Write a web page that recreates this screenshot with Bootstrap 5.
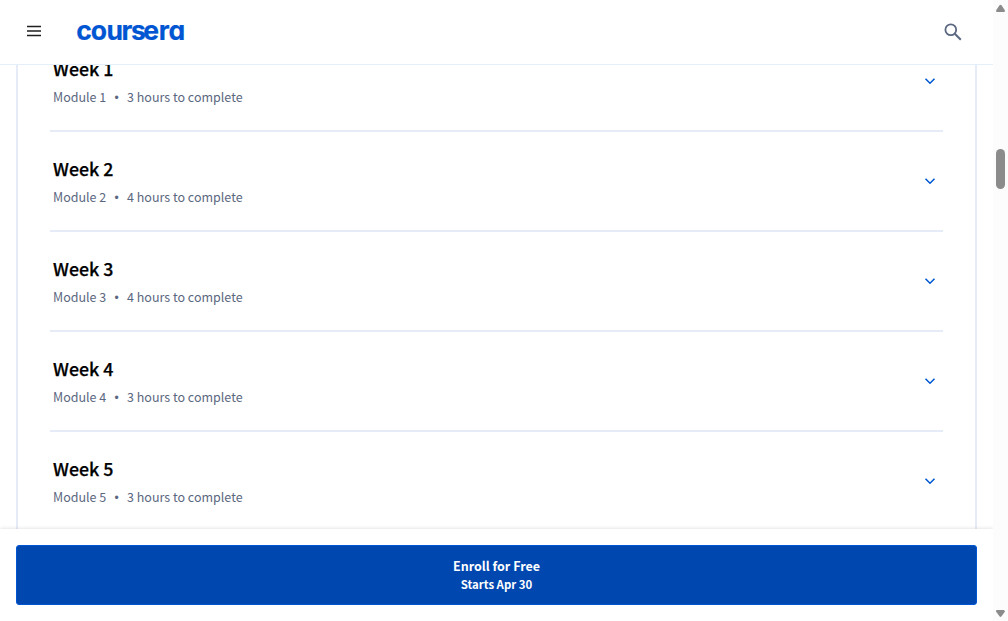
<!DOCTYPE html>
<html lang="en">
<head>
<meta charset="utf-8">
<meta name="viewport" content="width=device-width, initial-scale=1">
<title>Coursera</title>
<link href="https://cdn.jsdelivr.net/npm/bootstrap@5.3.0/dist/css/bootstrap.min.css" rel="stylesheet">
<style>
body{font-family:"Noto Sans CJK SC",sans-serif;color:#0f1114;background:#fff}
.topbar{height:65px;border-bottom:1px solid #e5eefb;padding:0 31px 3px 26px}
.topbar .find{margin-top:2px}
.syllabus{margin:-33px 16px 0;border:solid #e5ecf8;border-width:0 2px;padding:0 32px}
.week{height:100px;border-bottom:2px solid #e5ecf8;padding:24px 6px 0 3px}
.week h2{font-size:17.8px;line-height:24px;font-weight:500;margin:0 0 5px;color:#000;-webkit-text-stroke:.25px #000}
.week p{font-size:12.5px;line-height:24px;color:#5b6780;white-space:nowrap}
.part{width:53px}
.dot{width:21px;text-align:center;font-family:"Liberation Sans",sans-serif;font-size:12px;line-height:26px;height:24px}
.chev{margin-top:18px}
.enroll-bar{height:92px;padding:16px;box-shadow:0 0 4px rgba(0,0,0,.16);z-index:2}
.enroll{background:#0048b0;border:1px solid #0056d2;border-radius:3px;height:60px;color:#fff;font-weight:700;padding:0 0 1px}
.enroll:hover{background:#0048b0;color:#fff}
.enroll .t1{font-size:12.5px;line-height:18px}
.enroll .t2{font-size:11.4px;line-height:18px}
.scroller{width:15px;background:#fcfcfc}
.thumb{width:9px;height:40px;background:#8b8b8b;margin:135px 0 0 3px}
.wordmark{font:700 26.5px Inter,sans-serif;font-feature-settings:"cv11"}
</style>
</head>
<body>
<div class="d-flex vh-100 overflow-hidden">
  <div class="d-flex flex-column flex-grow-1">
    <header class="topbar d-flex align-items-center bg-white flex-shrink-0 position-relative z-1">
      <svg width="16" height="12" viewBox="0 0 16 12" aria-label="Menu"><path d="M1 1.5h14M1 6h14M1 10.5h14" stroke="#1f1f1f" stroke-width="1.6"/></svg>
      <svg class="ms-4" width="130" height="40" viewBox="66 11 130 40" aria-label="Coursera"><text class="wordmark" x="76.2 90.8 106.6 121.4 130.9 143.3 158.8 168.4" y="40.4" fill="#0056d2" stroke="#0056d2" stroke-width=".2">coursera</text></svg>
      <svg class="find ms-auto" width="18" height="18" viewBox="0 0 18 18" aria-label="Search"><circle cx="6.8" cy="6.8" r="5.4" fill="none" stroke="#5b6780" stroke-width="1.8"/><path d="m10.8 10.8 6 6" stroke="#5b6780" stroke-width="2"/></svg>
    </header>
    <main class="flex-grow-1 overflow-hidden">
      <div class="syllabus">
        <section class="week d-flex justify-content-between"><div><h2>Week 1</h2><p class="m-0 d-flex"><span class="part">Module 1</span><span class="dot">•</span><span>3 hours to complete</span></p></div><svg class="chev" width="14" height="14" viewBox="0 0 14 14"><path d="m2.5 4.8 4.5 4.4 4.5-4.4" fill="none" stroke="#0056d2" stroke-width="1.6"/></svg></section>
        <section class="week d-flex justify-content-between"><div><h2>Week 2</h2><p class="m-0 d-flex"><span class="part">Module 2</span><span class="dot">•</span><span>4 hours to complete</span></p></div><svg class="chev" width="14" height="14" viewBox="0 0 14 14"><path d="m2.5 4.8 4.5 4.4 4.5-4.4" fill="none" stroke="#0056d2" stroke-width="1.6"/></svg></section>
        <section class="week d-flex justify-content-between"><div><h2>Week 3</h2><p class="m-0 d-flex"><span class="part">Module 3</span><span class="dot">•</span><span>4 hours to complete</span></p></div><svg class="chev" width="14" height="14" viewBox="0 0 14 14"><path d="m2.5 4.8 4.5 4.4 4.5-4.4" fill="none" stroke="#0056d2" stroke-width="1.6"/></svg></section>
        <section class="week d-flex justify-content-between"><div><h2>Week 4</h2><p class="m-0 d-flex"><span class="part">Module 4</span><span class="dot">•</span><span>3 hours to complete</span></p></div><svg class="chev" width="14" height="14" viewBox="0 0 14 14"><path d="m2.5 4.8 4.5 4.4 4.5-4.4" fill="none" stroke="#0056d2" stroke-width="1.6"/></svg></section>
        <section class="week d-flex justify-content-between"><div><h2>Week 5</h2><p class="m-0 d-flex"><span class="part">Module 5</span><span class="dot">•</span><span>3 hours to complete</span></p></div><svg class="chev" width="14" height="14" viewBox="0 0 14 14"><path d="m2.5 4.8 4.5 4.4 4.5-4.4" fill="none" stroke="#0056d2" stroke-width="1.6"/></svg></section>
      </div>
    </main>
    <footer class="enroll-bar bg-white flex-shrink-0 position-relative">
      <button class="btn enroll w-100 d-flex flex-column align-items-center justify-content-center"><span class="t1">Enroll for Free</span><span class="t2">Starts Apr 30</span></button>
    </footer>
  </div>
  <aside class="scroller d-flex flex-column flex-shrink-0 position-relative z-3">
    <svg width="15" height="14" viewBox="0 0 15 14"><path d="M6.5 5.3Q7.5 4.3 8.5 5.3L12 10.5Q12 12 11 12H4Q3 12 3 10.5Z" fill="#8b8b8b"/></svg>
    <div class="thumb rounded-pill"></div>
    <svg class="mt-auto" width="15" height="13" viewBox="0 0 15 13"><path d="M3 2.5 4 2H11L12 3.5 8.5 8.3Q7.5 9.5 6.5 8.3L3 3.5Z" fill="#8b8b8b"/></svg>
  </aside>
</div>
<script src="https://cdn.jsdelivr.net/npm/bootstrap@5.3.0/dist/js/bootstrap.bundle.min.js"></script>
</body>
</html>
